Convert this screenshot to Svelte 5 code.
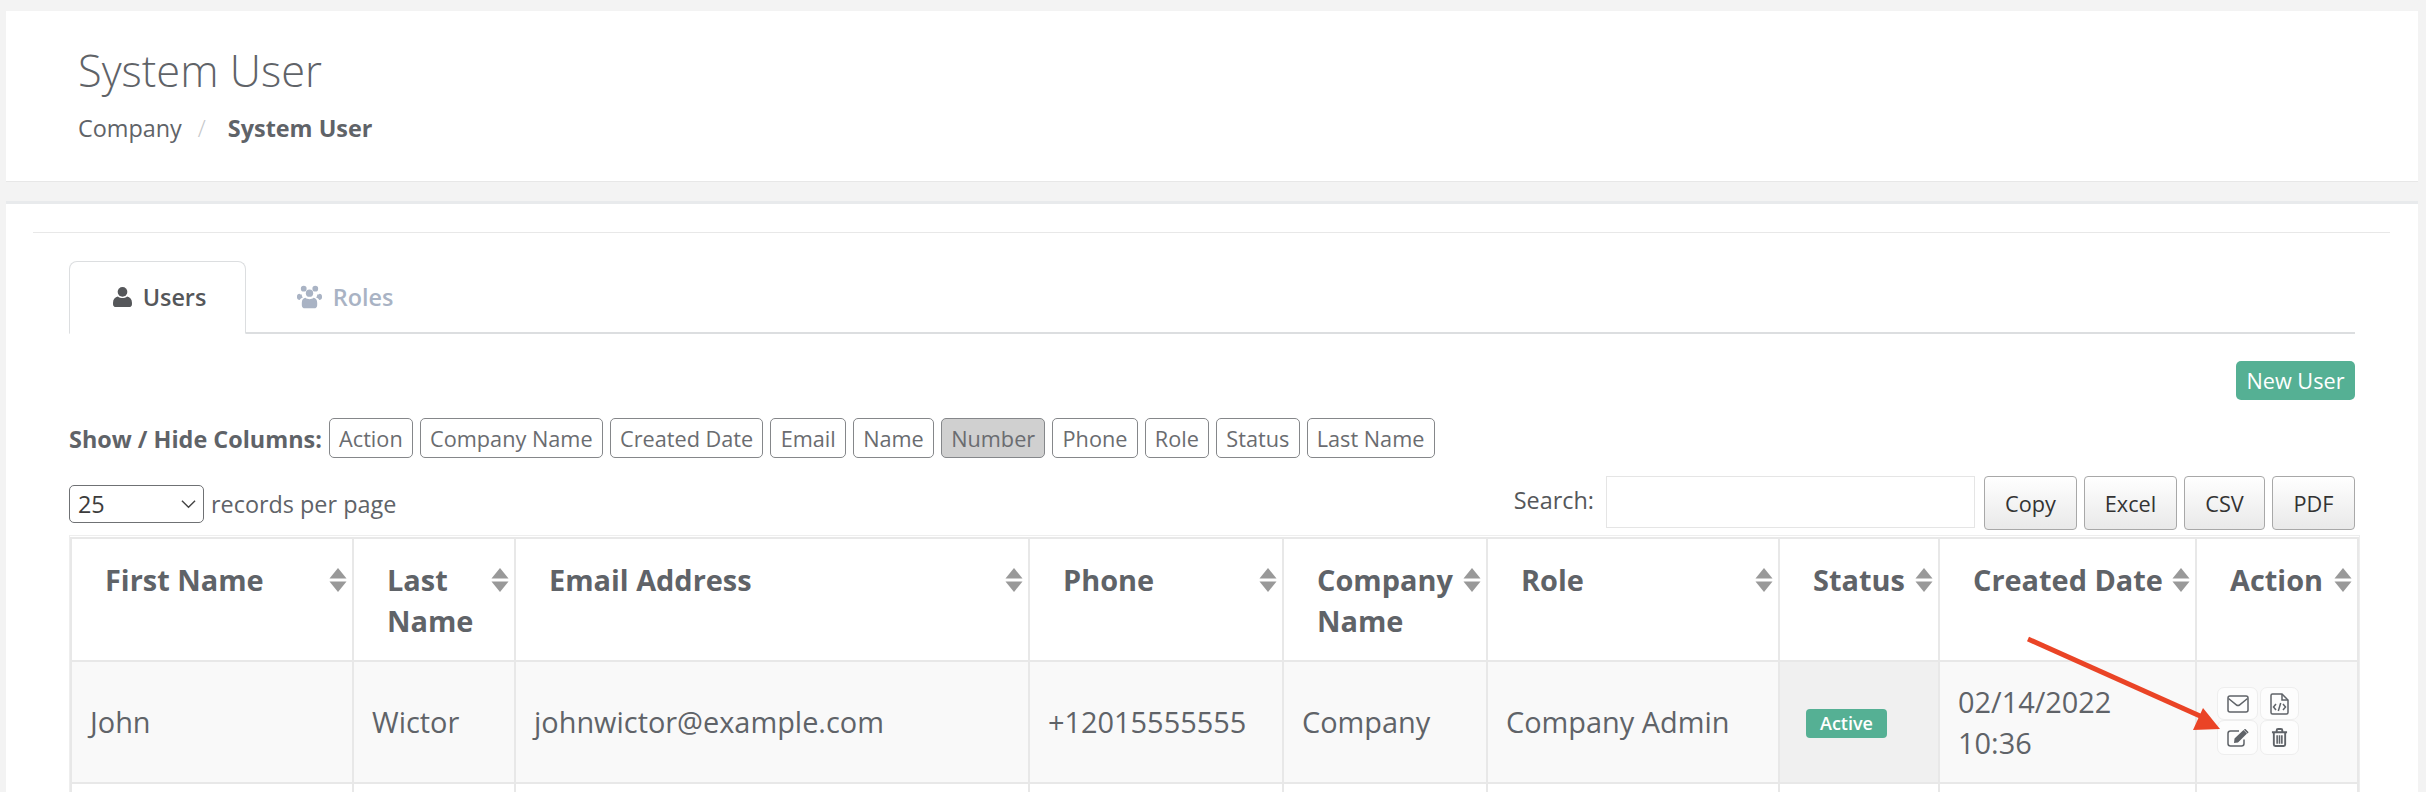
<script lang="ts">
  const columnToggles = [
    { label: "Action" },
    { label: "Company Name" },
    { label: "Created Date" },
    { label: "Email" },
    { label: "Name" },
    { label: "Number", off: true },
    { label: "Phone" },
    { label: "Role" },
    { label: "Status" },
    { label: "Last Name" },
  ];

  const headers = [
    "First Name",
    "Last Name",
    "Email Address",
    "Phone",
    "Company Name",
    "Role",
    "Status",
    "Created Date",
    "Action",
  ];

  const widths = [282, 162, 514, 254, 204, 292, 160, 257, 162];
</script>

<div class="page">
  <header class="page-head">
    <h1>System User</h1>
    <nav class="crumbs">
      <span>Company</span>
      <span class="sep">/</span>
      <strong>System User</strong>
    </nav>
  </header>

  <main class="card">
    <hr class="rule" />

    <div class="content">
      <div class="tabs">
        <div class="tab tab--active">
          <svg class="tab__icon" viewBox="1 0.5 18 19" aria-hidden="true">
            <circle cx="10" cy="5.2" r="4.6" />
            <path d="M1 15.5c0-3.6 2-5.6 4.6-6 1.2 1 2.8 1.5 4.4 1.5s3.2-.5 4.400-1.500c2.600.4 4.600 2.400 4.600 6v1.300c0 1.600-1.100 2.700-2.700 2.700H3.700C2.100 19.500 1 18.400 1 16.800z" />
          </svg>
          Users
        </div>
        <div class="tab">
          <svg class="tab__icon tab__icon--wide" viewBox="0 0 26 24" aria-hidden="true">
            <circle cx="7" cy="3.4" r="3" />
            <circle cx="19" cy="3.4" r="3" />
            <circle cx="13" cy="8" r="3.8" />
            <path d="M0 11.5c0-2 1-3 2.6-3 .6.5 1.5.9 2.4 1-.1 1 .3 2.300 1 3.200-1.500.3-2.600 1.200-3.200 2.300C1.200 15 0 14 0 12.500zM26 11.500c0-2-1-3-2.600-3-.6.5-1.500.9-2.400 1 .1 1-.3 2.300-1 3.200 1.500.3 2.600 1.200 3.200 2.300 1.600 0 2.800-1 2.800-2.500z" />
            <path d="M5 18c0-3 1.500-5 3.800-5.200 1.100 1 2.600 1.500 4.200 1.500s3.100-.5 4.200-1.500C19.500 13 21 15 21 18v2.500c0 2-1.300 3.300-3.300 3.300H8.300C6.300 23.800 5 22.500 5 20.500z" />
          </svg>
          Roles
        </div>
      </div>

      <div class="actions">
        <button type="button" class="btn-new">New User</button>
      </div>

      <div class="toggles">
        <span class="toggles__label">Show / Hide Columns:</span>
        {#each columnToggles as col}
          <button type="button" class="toggle" class:toggle--off={col.off}>{col.label}</button>
        {/each}
      </div>

      <div class="controls">
        <label class="length">
          <span class="select"
            >25
            <svg viewBox="0 0 16 10" aria-hidden="true"><path d="M1 1.500l7 7 7-7" /></svg>
          </span>
          records per page
        </label>
        <div class="tools">
          <span class="search-label">Search:</span>
          <span class="search"></span>
          <button type="button" class="export">Copy</button>
          <button type="button" class="export">Excel</button>
          <button type="button" class="export">CSV</button>
          <button type="button" class="export">PDF</button>
        </div>
      </div>

      <div class="table-wrap">
        <table>
          <colgroup>
            {#each widths as w}
              <col style="width: {w}px" />
            {/each}
          </colgroup>
          <thead>
            <tr>
              {#each headers as title}
                <th>
                  <div class="th">
                    <span>{title}</span>
                    <svg class="sort" viewBox="0 0 18 24" aria-hidden="true">
                      <path d="M9 0l8.500 10.500H.5z" />
                      <path d="M.5 13.500h17L9 24z" />
                    </svg>
                  </div>
                </th>
              {/each}
            </tr>
          </thead>
          <tbody>
            <tr class="odd">
              <td>John</td>
              <td>Wictor</td>
              <td>johnwictor@example.com</td>
              <td>+12015555555</td>
              <td>Company</td>
              <td>Company Admin</td>
              <td class="sorted"><span class="badge">Active</span></td>
              <td>02/14/2022 10:36</td>
              <td class="action-cell">
                <div class="icon-grid">
                  <span class="icon-btn icon-btn--a">
                    <svg viewBox="0 0 22 18" aria-hidden="true">
                      <rect x="1" y="1" width="20" height="16" rx="2" />
                      <path d="M1.500 3.500l7.800 6.300c1 .8 2.400.8 3.400 0l7.800-6.300" />
                    </svg>
                  </span>
                  <span class="icon-btn icon-btn--b">
                    <svg viewBox="0 0 19 22" aria-hidden="true">
                      <path d="M12 1H2.500C1.700 1 1 1.700 1 2.500v17c0 .8.700 1.500 1.500 1.500h14c.8 0 1.500-.7 1.500-1.500V7z" />
                      <path d="M12 1v6h6" />
                      <path d="M6 11l-2.500 3L6 17M13 11l2.500 3-2.500 3M10.700 10l-2.400 8" />
                    </svg>
                  </span>
                  <span class="icon-btn icon-btn--a">
                    <svg viewBox="0 0 22 18" aria-hidden="true">
                      <path d="M17 10.500v4c0 1.400-1.100 2.500-2.500 2.500h-11C2.100 17 1 15.900 1 14.500v-10C1 3.100 2.100 2 3.500 2H12" />
                      <path class="solid" d="M7.500 9.500L16.500 1l3.500 3.500L11 13.500l-4 .6zM17.500.2c.4-.3.900-.3 1.200 0l2.500 2.500c.3.3.3.8 0 1.200l-.6.600-3.700-3.700z" />
                    </svg>
                  </span>
                  <span class="icon-btn icon-btn--c">
                    <svg viewBox="0 0 18 20" aria-hidden="true">
                      <path d="M1 4.500h16M6 4V2.500C6 1.700 6.700 1 7.500 1h3c.8 0 1.500.7 1.500 1.500V4" />
                      <path d="M3 5v12.500C3 18.400 3.600 19 4.500 19h9c.9 0 1.500-.6 1.500-1.500V5" />
                      <path class="bars" d="M6.500 7.500v9M9 7.500v9M11.500 7.500v9" />
                    </svg>
                  </span>
                </div>
              </td>
            </tr>
            <tr class="empty">
              {#each headers as _}
                <td></td>
              {/each}
            </tr>
          </tbody>
        </table>
      </div>
    </div>
  </main>

  <svg class="callout" viewBox="0 0 200 100" aria-hidden="true">
    <path class="callout__line" d="M2 2L183 83" />
    <path class="callout__head" d="M177 71L167 93L194 92z" />
  </svg>
</div>

<style>
  :global(body) {
    margin: 0;
    background: #f3f3f3;
    overflow: hidden;
  }

  .page {
    position: relative;
    height: 792px;
    overflow: hidden;
    padding: 11px 8px 0 6px;
    box-sizing: border-box;
    font-family: "Open Sans", "Liberation Sans", sans-serif;
    color: #5f6368;
  }

  .page-head {
    height: 171px;
    box-sizing: border-box;
    padding: 33px 72px 0;
    background: #fff;
    border-bottom: 1px solid #e7e7e7;
  }

  h1 {
    margin: 0;
    font-size: 43.4px;
    font-weight: 300;
    line-height: 54px;
    color: #5f6368;
  }

  .crumbs {
    display: flex;
    gap: 15px;
    margin-top: 15px;
    font-size: 23.4px;
    line-height: 30px;
  }

  .crumbs .sep {
    margin: 0 7px 0 1px;
    color: #c4c6c9;
    font-weight: 300;
  }

  .crumbs strong {
    font-weight: 700;
  }

  .card {
    margin-top: 19px;
    height: 600px;
    box-sizing: border-box;
    padding-top: 28px;
    background: #fff;
    border-top: 3px solid #e8eaec;
  }

  .rule {
    margin: 0 28px 0 27px;
    border: 0;
    border-top: 1px solid #e8e8e8;
  }

  .content {
    padding: 28px 63px 0 63px;
  }

  .tabs {
    display: flex;
    height: 73px;
    box-sizing: border-box;
    border-bottom: 2px solid #dcdee0;
    font-size: 23.4px;
    font-weight: 600;
  }

  .tab {
    display: flex;
    align-items: center;
    justify-content: center;
    gap: 11px;
    width: 177px;
    height: 72px;
    box-sizing: border-box;
    padding-bottom: 1px;
    color: #a9b3c4;
  }

  .tab--active {
    height: 73px;
    padding-left: 4px;
    color: #55575a;
    background: #fff;
    border: 1px solid #dcdee0;
    border-bottom-color: #fff;
    border-radius: 8px 8px 0 0;
  }

  .tab + .tab {
    width: 198px;
  }

  .tab__icon {
    width: 19px;
    height: 20px;
    fill: currentColor;
  }

  .tab__icon--wide {
    width: 25px;
    height: 24px;
  }

  .actions {
    display: flex;
    justify-content: flex-end;
    margin-top: 27px;
  }

  .btn-new {
    width: 119px;
    height: 39px;
    padding: 0;
    border: 0;
    border-radius: 5px;
    background: #55b094;
    color: #fff;
    font: inherit;
    font-size: 21.7px;
  }

  .toggles {
    display: flex;
    align-items: center;
    gap: 7px;
    margin-top: 18px;
    height: 40px;
  }

  .toggles__label {
    font-size: 23.4px;
    font-weight: 700;
    white-space: nowrap;
    padding-top: 2px;
  }

  .toggle {
    height: 40px;
    padding: 0 9.2px;
    border: 1px solid #85878a;
    border-radius: 5px;
    background: #fff;
    color: #6a6c70;
    font: inherit;
    font-size: 21.7px;
    white-space: nowrap;
  }

  .toggle--off {
    background: #d0d0d0;
  }

  .controls {
    display: flex;
    justify-content: space-between;
    margin-top: 18px;
    height: 59px;
  }

  .length {
    display: flex;
    align-items: center;
    gap: 7px;
    height: 38px;
    margin-top: 9px;
    font-size: 23.4px;
  }

  .select {
    display: flex;
    align-items: center;
    justify-content: space-between;
    width: 135px;
    height: 38px;
    box-sizing: border-box;
    padding: 0 7px 0 8px;
    border: 1px solid #6f7174;
    border-radius: 5px;
    color: #3c3c3c;
    font-size: 23.4px;
  }

  .select svg {
    width: 15px;
    height: 10px;
    fill: none;
    stroke: #444;
    stroke-width: 1.500;
  }

  .tools {
    display: flex;
    align-items: flex-start;
    gap: 7px;
  }

  .search-label {
    margin-right: 5px;
    font-size: 23.4px;
    line-height: 48px;
    color: #55575a;
  }

  .search {
    width: 369px;
    height: 52px;
    box-sizing: border-box;
    margin-right: 2px;
    border: 1px solid #e5e5e5;
  }

  .export {
    height: 54px;
    padding: 0;
    border: 1px solid #a8a8a8;
    border-radius: 4px;
    background: linear-gradient(#fff, #e9e9e9);
    color: #333;
    font: inherit;
    font-size: 21.7px;
  }

  .export:nth-of-type(1) { width: 93px; }
  .export:nth-of-type(2) { width: 93px; }
  .export:nth-of-type(3) { width: 81px; }
  .export:nth-of-type(4) { width: 83px; }

  .table-wrap {
    width: 2289px;
    border: 1px solid #eeeeee;
    border-bottom: 0;
  }

  table {
    width: 2287px;
    table-layout: fixed;
    border-collapse: collapse;
    margin-top: 1px;
    font-size: 28.9px;
  }

  th,
  td {
    border: 2px solid #e8e8e8;
    box-sizing: border-box;
  }

  th {
    height: 123px;
    padding: 20px 5px 0 33px;
    vertical-align: top;
    text-align: left;
    font-weight: 700;
    line-height: 41px;
  }

  .th {
    display: flex;
    justify-content: space-between;
    gap: 4px;
  }

  .sort {
    flex: 0 0 auto;
    width: 18px;
    height: 24px;
    margin-top: 9px;
    fill: #999;
  }

  td {
    padding: 0 18px 1px;
    line-height: 41px;
    font-weight: 400;
  }

  .odd td {
    height: 122px;
    background: #f9f9f9;
  }

  .odd td.sorted {
    padding: 0 18px 5px 26px;
    background: #f0f0f0;
  }

  .badge {
    display: inline-block;
    width: 81px;
    height: 29px;
    border-radius: 4px;
    background: #55b094;
    color: #fff;
    font-size: 18px;
    font-weight: 600;
    line-height: 29px;
    text-align: center;
    vertical-align: middle;
  }

  .empty td {
    height: 120px;
    background: #fff;
  }

  .odd td.action-cell {
    padding: 0 0 2px 20px;
  }

  .icon-grid {
    display: grid;
    grid-template-columns: 41px 39px;
    grid-template-rows: 33px 35px;
    column-gap: 2px;
    width: 82px;
  }

  .icon-btn {
    display: flex;
    align-items: center;
    justify-content: center;
    border: 1px solid #eeeeee;
    border-radius: 7px;
    background: #fdfdfd;
  }

  .icon-btn:last-child {
    width: 37px;
  }

  .icon-btn svg {
    fill: none;
    stroke: #5f6368;
    stroke-width: 1.500;
  }

  .icon-btn--a svg {
    width: 22px;
    height: 18px;
  }

  .icon-btn--b svg {
    width: 19px;
    height: 22px;
  }

  .icon-btn--c svg {
    width: 17px;
    height: 19px;
    stroke-width: 2;
  }

  .icon-btn .solid {
    fill: #5f6368;
    stroke: none;
  }

  .icon-btn .bars {
    stroke-width: 1.700;
  }

  .callout {
    position: absolute;
    left: 2026px;
    top: 637px;
    width: 200px;
    height: 100px;
    overflow: visible;
  }

  .callout__line {
    stroke: #ea4426;
    stroke-width: 5;
    fill: none;
  }

  .callout__head {
    fill: #ea4426;
  }
</style>
